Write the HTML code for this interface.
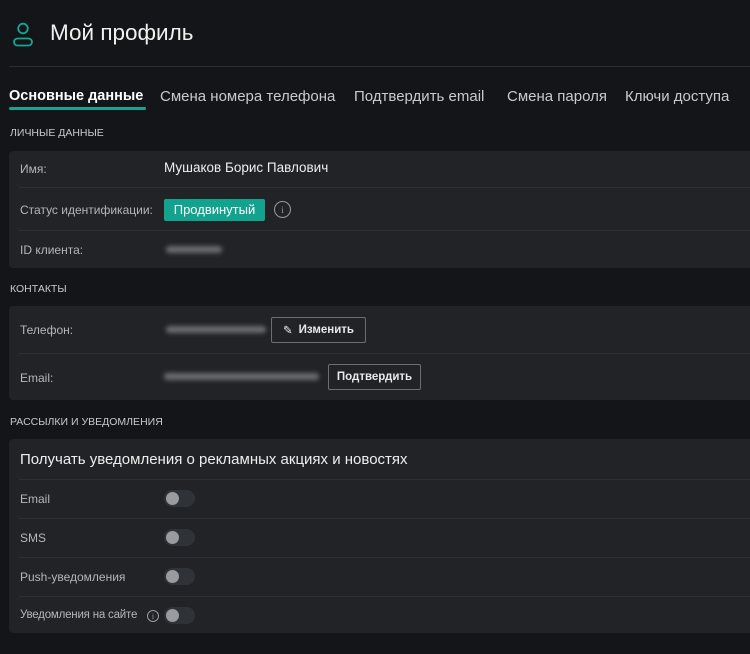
<!DOCTYPE html>
<html><head><meta charset="utf-8"><style>
*{margin:0;padding:0;box-sizing:border-box}
body{width:750px;height:654px;background:#141518;font-family:"Liberation Sans",sans-serif;color:#e6e6e6;position:relative;overflow:hidden}
.a{position:absolute;white-space:nowrap}
.card{position:absolute;left:9px;width:760px;background:#212327;border-radius:4px}
.hr{position:absolute;left:10px;right:0;height:1px;background:#2c2f34}
.lbl{font-size:12px;color:#b4b6ba}
.sec{font-size:10.5px;color:#c8c9cc;left:10px}
.tab{font-size:15px;color:#c9cacd;top:88px}
.tg{position:absolute;left:155px;width:31px;height:17px;border-radius:9px;background:#2f3237}
.tg::after{content:"";position:absolute;left:2px;top:2px;width:13px;height:13px;border-radius:50%;background:#9a9b9e}
.btn{position:absolute;border:1px solid #6b6e73;border-radius:2px;font-size:11.5px;font-weight:bold;color:#e8e8e8;display:flex;align-items:center;justify-content:center}
.blur{position:absolute;height:7px;background:#6a6c70;filter:blur(2.5px);border-radius:3px}
.info{position:absolute;border:1.3px solid #9a9b9e;border-radius:50%;color:#9a9b9e;font-size:9px;display:flex;align-items:center;justify-content:center;font-family:"Liberation Serif",serif}
</style></head><body>
<svg class="a" style="left:12px;top:22px" width="22" height="26" viewBox="0 0 22 26"><circle cx="11" cy="6.5" r="4.8" fill="none" stroke="#17a593" stroke-width="1.8"/><rect x="2" y="16.5" width="18" height="7" rx="3.5" fill="none" stroke="#17a593" stroke-width="1.8"/></svg>
<div class="a" style="left:50px;top:20px;font-size:22.5px;color:#f0f0f0">Мой профиль</div>
<div class="a" style="left:9px;top:66px;width:741px;height:1px;background:#2a2c30"></div>
<div class="a tab" style="left:9px;font-weight:bold;color:#fff;font-size:14.5px">Основные данные</div>
<div class="a" style="left:9px;top:107px;width:137px;height:3px;background:#17a593;border-radius:2px"></div>
<div class="a tab" style="left:160px">Смена номера телефона</div>
<div class="a tab" style="left:354px">Подтвердить email</div>
<div class="a tab" style="left:507px">Смена пароля</div>
<div class="a tab" style="left:625px">Ключи доступа</div>

<div class="a sec" style="top:127px">ЛИЧНЫЕ ДАННЫЕ</div>
<div class="card" style="top:151px;height:117px">
 <div class="a lbl" style="left:11px;top:11px">Имя:</div>
 <div class="a" style="left:155px;top:9px;font-size:13.5px;color:#eee">Мушаков Борис Павлович</div>
 <div class="hr" style="top:36px"></div>
 <div class="a lbl" style="left:11px;top:52px">Статус идентификации:</div>
 <div class="a" style="left:155px;top:48px;width:101px;height:22px;background:#12a38f;border-radius:2px;font-size:13px;color:#fff;text-align:center;line-height:22px">Продвинутый</div>
 <div class="info" style="left:265px;top:50px;width:17px;height:17px">i</div>
 <div class="hr" style="top:79px"></div>
 <div class="blur" style="left:157px;top:95px;width:56px"></div>
 <div class="a lbl" style="left:11px;top:92px">ID клиента:</div>
</div>

<div class="a sec" style="top:283px">КОНТАКТЫ</div>
<div class="card" style="top:306px;height:94px">
 <div class="a lbl" style="left:11px;top:17px">Телефон:</div>
 <div class="blur" style="left:157px;top:20px;width:100px"></div>
 <div class="btn" style="left:262px;top:11px;width:95px;height:26px"><span style="font-weight:normal;margin-right:6px">✎</span>Изменить</div>
 <div class="hr" style="top:47px"></div>
 <div class="a lbl" style="left:11px;top:65px">Email:</div>
 <div class="blur" style="left:155px;top:67px;width:155px"></div>
 <div class="btn" style="left:319px;top:58px;width:93px;height:26px">Подтвердить</div>
</div>

<div class="a sec" style="top:416px">РАССЫЛКИ И УВЕДОМЛЕНИЯ</div>
<div class="card" style="top:439px;height:194px">
 <div class="a" style="left:11px;top:12px;font-size:15px;color:#eee">Получать уведомления о рекламных акциях и новостях</div>
 <div class="hr" style="top:40px"></div>
 <div class="a lbl" style="left:11px;top:53px">Email</div>
 <div class="tg" style="top:51px"></div>
 <div class="hr" style="top:79px"></div>
 <div class="a lbl" style="left:11px;top:92px">SMS</div>
 <div class="tg" style="top:90px"></div>
 <div class="hr" style="top:118px"></div>
 <div class="a lbl" style="left:11px;top:131px">Push-уведомления</div>
 <div class="tg" style="top:129px"></div>
 <div class="hr" style="top:157px"></div>
 <div class="a lbl" style="left:11px;top:170px;font-size:11.5px;letter-spacing:-0.2px">Уведомления на сайте</div>
 <div class="info" style="left:138px;top:171px;width:12px;height:12px;font-size:8px">i</div>
 <div class="tg" style="top:168px"></div>
</div>
</body></html>
